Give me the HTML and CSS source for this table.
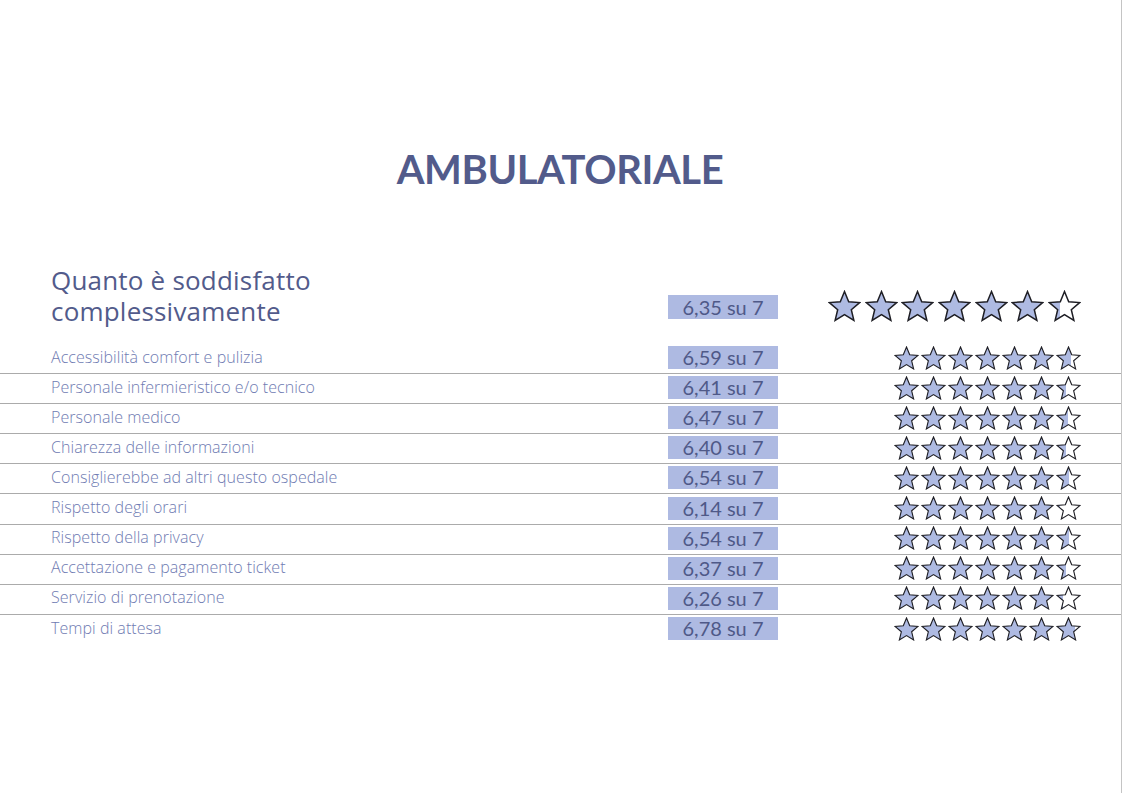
FILE: index.html
```html
<!DOCTYPE html>
<html lang="it">
<head>
<meta charset="utf-8">
<title>Ambulatoriale</title>
<link rel="stylesheet" href="styles.css">
</head>
<body>
<svg class="defs" width="0" height="0" aria-hidden="true">
  <defs>
    <symbol id="star" viewBox="0 0 24 23">
      <polygon points="12,1 15.06,8.39 23.03,9.02 16.95,14.21 18.82,21.98 12,17.8 5.18,21.98 7.05,14.21 0.97,9.02 8.94,8.39" stroke="#1e1e24" stroke-width="1.1" stroke-linejoin="miter"/>
    </symbol>
    <linearGradient id="f35" x1="0" x2="1" y1="0" y2="0"><stop offset="0.35" stop-color="#aebae2"/><stop offset="0.35" stop-color="#fff"/></linearGradient>
    <linearGradient id="f59" x1="0" x2="1" y1="0" y2="0"><stop offset="0.59" stop-color="#aebae2"/><stop offset="0.59" stop-color="#fff"/></linearGradient>
    <linearGradient id="f41" x1="0" x2="1" y1="0" y2="0"><stop offset="0.41" stop-color="#aebae2"/><stop offset="0.41" stop-color="#fff"/></linearGradient>
    <linearGradient id="f47" x1="0" x2="1" y1="0" y2="0"><stop offset="0.47" stop-color="#aebae2"/><stop offset="0.47" stop-color="#fff"/></linearGradient>
    <linearGradient id="f40" x1="0" x2="1" y1="0" y2="0"><stop offset="0.40" stop-color="#aebae2"/><stop offset="0.40" stop-color="#fff"/></linearGradient>
    <linearGradient id="f54" x1="0" x2="1" y1="0" y2="0"><stop offset="0.54" stop-color="#aebae2"/><stop offset="0.54" stop-color="#fff"/></linearGradient>
    <linearGradient id="f14" x1="0" x2="1" y1="0" y2="0"><stop offset="0.14" stop-color="#aebae2"/><stop offset="0.14" stop-color="#fff"/></linearGradient>
    <linearGradient id="f37" x1="0" x2="1" y1="0" y2="0"><stop offset="0.37" stop-color="#aebae2"/><stop offset="0.37" stop-color="#fff"/></linearGradient>
    <linearGradient id="f26" x1="0" x2="1" y1="0" y2="0"><stop offset="0.26" stop-color="#aebae2"/><stop offset="0.26" stop-color="#fff"/></linearGradient>
    <linearGradient id="f78" x1="0" x2="1" y1="0" y2="0"><stop offset="0.78" stop-color="#aebae2"/><stop offset="0.78" stop-color="#fff"/></linearGradient>
  </defs>
</svg>

<div class="page">
  <h1 class="title">AMBULATORIALE</h1>

  <section class="ratings">
    <div class="row row-main">
      <div class="label">Quanto è soddisfatto<br>complessivamente</div>
      <div class="score">6,35 su 7</div>
      <div class="stars">
        <svg class="star"><use href="#star" class="full"/></svg>
        <svg class="star"><use href="#star" class="full"/></svg>
        <svg class="star"><use href="#star" class="full"/></svg>
        <svg class="star"><use href="#star" class="full"/></svg>
        <svg class="star"><use href="#star" class="full"/></svg>
        <svg class="star"><use href="#star" class="full"/></svg>
        <svg class="star"><use href="#star" fill="url(#f35)"/></svg>
      </div>
    </div>

    <div class="row">
      <div class="label">Accessibilità comfort e pulizia</div>
      <div class="score">6,59 su 7</div>
      <div class="stars">
        <svg class="star"><use href="#star" class="full"/></svg>
        <svg class="star"><use href="#star" class="full"/></svg>
        <svg class="star"><use href="#star" class="full"/></svg>
        <svg class="star"><use href="#star" class="full"/></svg>
        <svg class="star"><use href="#star" class="full"/></svg>
        <svg class="star"><use href="#star" class="full"/></svg>
        <svg class="star"><use href="#star" fill="url(#f59)"/></svg>
      </div>
    </div>

    <div class="row">
      <div class="label">Personale infermieristico e/o tecnico</div>
      <div class="score">6,41 su 7</div>
      <div class="stars">
        <svg class="star"><use href="#star" class="full"/></svg>
        <svg class="star"><use href="#star" class="full"/></svg>
        <svg class="star"><use href="#star" class="full"/></svg>
        <svg class="star"><use href="#star" class="full"/></svg>
        <svg class="star"><use href="#star" class="full"/></svg>
        <svg class="star"><use href="#star" class="full"/></svg>
        <svg class="star"><use href="#star" fill="url(#f41)"/></svg>
      </div>
    </div>

    <div class="row">
      <div class="label">Personale medico</div>
      <div class="score">6,47 su 7</div>
      <div class="stars">
        <svg class="star"><use href="#star" class="full"/></svg>
        <svg class="star"><use href="#star" class="full"/></svg>
        <svg class="star"><use href="#star" class="full"/></svg>
        <svg class="star"><use href="#star" class="full"/></svg>
        <svg class="star"><use href="#star" class="full"/></svg>
        <svg class="star"><use href="#star" class="full"/></svg>
        <svg class="star"><use href="#star" fill="url(#f47)"/></svg>
      </div>
    </div>

    <div class="row">
      <div class="label">Chiarezza delle informazioni</div>
      <div class="score">6,40 su 7</div>
      <div class="stars">
        <svg class="star"><use href="#star" class="full"/></svg>
        <svg class="star"><use href="#star" class="full"/></svg>
        <svg class="star"><use href="#star" class="full"/></svg>
        <svg class="star"><use href="#star" class="full"/></svg>
        <svg class="star"><use href="#star" class="full"/></svg>
        <svg class="star"><use href="#star" class="full"/></svg>
        <svg class="star"><use href="#star" fill="url(#f40)"/></svg>
      </div>
    </div>

    <div class="row">
      <div class="label">Consiglierebbe ad altri questo ospedale</div>
      <div class="score">6,54 su 7</div>
      <div class="stars">
        <svg class="star"><use href="#star" class="full"/></svg>
        <svg class="star"><use href="#star" class="full"/></svg>
        <svg class="star"><use href="#star" class="full"/></svg>
        <svg class="star"><use href="#star" class="full"/></svg>
        <svg class="star"><use href="#star" class="full"/></svg>
        <svg class="star"><use href="#star" class="full"/></svg>
        <svg class="star"><use href="#star" fill="url(#f54)"/></svg>
      </div>
    </div>

    <div class="row">
      <div class="label">Rispetto degli orari</div>
      <div class="score">6,14 su 7</div>
      <div class="stars">
        <svg class="star"><use href="#star" class="full"/></svg>
        <svg class="star"><use href="#star" class="full"/></svg>
        <svg class="star"><use href="#star" class="full"/></svg>
        <svg class="star"><use href="#star" class="full"/></svg>
        <svg class="star"><use href="#star" class="full"/></svg>
        <svg class="star"><use href="#star" class="full"/></svg>
        <svg class="star"><use href="#star" fill="url(#f14)"/></svg>
      </div>
    </div>

    <div class="row">
      <div class="label">Rispetto della privacy</div>
      <div class="score">6,54 su 7</div>
      <div class="stars">
        <svg class="star"><use href="#star" class="full"/></svg>
        <svg class="star"><use href="#star" class="full"/></svg>
        <svg class="star"><use href="#star" class="full"/></svg>
        <svg class="star"><use href="#star" class="full"/></svg>
        <svg class="star"><use href="#star" class="full"/></svg>
        <svg class="star"><use href="#star" class="full"/></svg>
        <svg class="star"><use href="#star" fill="url(#f54)"/></svg>
      </div>
    </div>

    <div class="row">
      <div class="label">Accettazione e pagamento ticket</div>
      <div class="score">6,37 su 7</div>
      <div class="stars">
        <svg class="star"><use href="#star" class="full"/></svg>
        <svg class="star"><use href="#star" class="full"/></svg>
        <svg class="star"><use href="#star" class="full"/></svg>
        <svg class="star"><use href="#star" class="full"/></svg>
        <svg class="star"><use href="#star" class="full"/></svg>
        <svg class="star"><use href="#star" class="full"/></svg>
        <svg class="star"><use href="#star" fill="url(#f37)"/></svg>
      </div>
    </div>

    <div class="row">
      <div class="label">Servizio di prenotazione</div>
      <div class="score">6,26 su 7</div>
      <div class="stars">
        <svg class="star"><use href="#star" class="full"/></svg>
        <svg class="star"><use href="#star" class="full"/></svg>
        <svg class="star"><use href="#star" class="full"/></svg>
        <svg class="star"><use href="#star" class="full"/></svg>
        <svg class="star"><use href="#star" class="full"/></svg>
        <svg class="star"><use href="#star" class="full"/></svg>
        <svg class="star"><use href="#star" fill="url(#f26)"/></svg>
      </div>
    </div>

    <div class="row">
      <div class="label">Tempi di attesa</div>
      <div class="score">6,78 su 7</div>
      <div class="stars">
        <svg class="star"><use href="#star" class="full"/></svg>
        <svg class="star"><use href="#star" class="full"/></svg>
        <svg class="star"><use href="#star" class="full"/></svg>
        <svg class="star"><use href="#star" class="full"/></svg>
        <svg class="star"><use href="#star" class="full"/></svg>
        <svg class="star"><use href="#star" class="full"/></svg>
        <svg class="star"><use href="#star" fill="url(#f78)"/></svg>
      </div>
    </div>
  </section>
</div>
</body>
</html>
```

FILE: styles.css
```css
* {
  box-sizing: border-box;
}

html, body {
  margin: 0;
  padding: 0;
  background: #ffffff;
}

.defs {
  position: absolute;
  width: 0;
  height: 0;
  overflow: hidden;
}

.page {
  width: 1122px;
  height: 793px;
  border-right: 1px solid #c4c4c4;
  padding-top: 149px;
  font-family: "Open Sans", Lato, sans-serif;
  overflow: hidden;
}

.title {
  margin: 0;
  text-align: center;
  font-family: Lato, sans-serif;
  font-weight: 700;
  font-size: 40px;
  line-height: 40px;
  color: #525b8b;
  letter-spacing: -0.4px;
  padding-right: 1px;
}

.ratings {
  margin-top: 76px;
}

.row {
  display: grid;
  grid-template-columns: 1fr 110px 303px;
  align-items: center;
  padding: 0 40px 0 51px;
  height: 30.1px;
  border-bottom: 1px solid #ababab;
}

.row:last-child {
  border-bottom: none;
}

.row-main {
  height: auto;
  border-bottom: none;
  align-items: end;
  margin-bottom: 17px;
}

.label {
  font-family: "Open Sans", sans-serif;
  font-weight: 300;
  font-size: 16px;
  letter-spacing: 0.05px;
  color: #6f7bb2;
  white-space: nowrap;
  margin-top: -4px;
}

.row-main .label {
  margin-top: 0;
  font-weight: 400;
  font-size: 26px;
  line-height: 31px;
  letter-spacing: 0.2px;
  color: #525b8b;
}

.score {
  height: 23px;
  margin-bottom: 2px;
  background: #aebae2;
  color: #4f5988;
  font-family: Lato, sans-serif;
  font-size: 20px;
  line-height: 23px;
  text-align: center;
}

.row-main .score {
  height: 24px;
  line-height: 24px;
  font-size: 20px;
  margin-bottom: 8px;
}

.stars {
  display: flex;
  justify-content: flex-end;
  gap: 2px;
  margin-bottom: 2px;
}

.row-main .stars {
  gap: 3.7px;
  margin-bottom: 5px;
}

.star {
  width: 25px;
  height: 24px;
  display: block;
}

.row-main .star {
  width: 33px;
  height: 32px;
}

.full {
  fill: #aebae2;
}
```
